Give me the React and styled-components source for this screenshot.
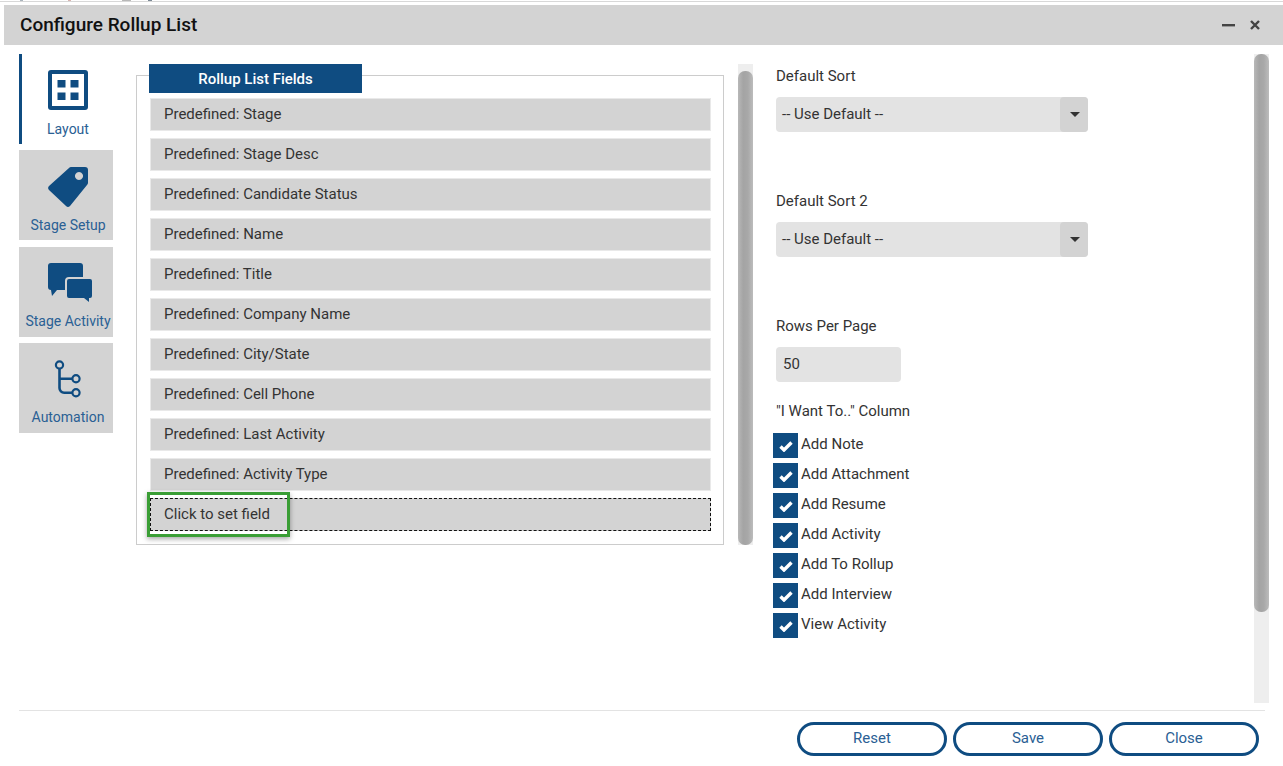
import styled, { createGlobalStyle } from 'styled-components';

const blue = '#0f4c81';

const GlobalStyle = createGlobalStyle`
  html, body {
    margin: 0;
    padding: 0;
    background: #fff;
    overflow: hidden;
  }
  * {
    box-sizing: border-box;
  }
`;

// slivers of the page behind the dialog, showing along the top edge
const BehindStrip = styled.div`
  height: 1px;
  width: 1283px;
  background:
    linear-gradient(#aab4bc, #aab4bc) 20px 0 / 3px 1px no-repeat,
    linear-gradient(#d8b4b0, #d8b4b0) 68px 0 / 3px 1px no-repeat,
    linear-gradient(#b8b8b8, #b8b8b8) 122px 0 / 9px 1px no-repeat,
    linear-gradient(#7d8a96, #7d8a96) 148px 0 / 4px 1px no-repeat,
    #fff;
`;

const Page = styled.div`
  width: 1283px;
  height: 765px;
  display: flex;
  flex-direction: column;
  padding: 3px 0 0 4px;
  border-top: 1px solid #d8d8d8;
  font-family: Roboto, "Liberation Sans", sans-serif;
  font-size: 15px;
  color: #333;
`;

const TitleBar = styled.header`
  height: 40px;
  flex: none;
  display: flex;
  align-items: center;
  justify-content: space-between;
  padding: 0 23px 0 16px;
  background: #d3d3d3;
`;

const Title = styled.h1`
  margin: 0 0 2px;
  font-size: 19px;
  font-weight: 500;
  color: #111;
`;

const WindowButtons = styled.div`
  display: flex;
  align-items: center;
  gap: 14px;
`;

const Body = styled.div`
  height: 655px;
  flex: none;
  display: flex;
  padding: 9px 0 0 15px;
`;

const Sidebar = styled.nav`
  width: 94px;
  flex: none;
  display: flex;
  flex-direction: column;
  gap: 6px;
`;

const NavLabel = styled.span`
  line-height: 17px;
`;

const NavItem = styled.div`
  height: 90px;
  flex: none;
  display: flex;
  flex-direction: column;
  align-items: center;
  padding: 15px 0 0 4px;
  background: ${({ $active }) => ($active ? '#fff' : '#d3d3d3')};
  box-shadow: ${({ $active }) => ($active ? `inset 3px 0 0 ${blue}` : 'none')};
  color: #2a6094;
  font-size: 14px;
  white-space: nowrap;

  &:nth-child(3) {
    margin-top: 1px;
  }

  &:nth-child(n + 3) ${NavLabel} {
    margin-top: -1px;
  }
`;

const NavIcon = styled.div`
  width: 42px;
  height: 42px;
  margin-bottom: 10px;
  display: flex;
  align-items: center;
  justify-content: center;

  svg {
    flex: none;
  }
`;

const FieldsColumn = styled.section`
  width: 588px;
  flex: none;
  margin-left: 23px;
  padding-top: 21px;
`;

const FieldsBox = styled.div`
  height: 470px;
  padding: 0 12px 0 13px;
  border: 1px solid #ccc;
`;

const Legend = styled.div`
  width: 213px;
  height: 29px;
  margin: -12px 0 5px -1px;
  display: flex;
  align-items: center;
  justify-content: center;
  background: ${blue};
  color: #fff;
  font-weight: 500;
`;

const FieldList = styled.div`
  display: flex;
  flex-direction: column;
  gap: 7px;
`;

const FieldRow = styled.div`
  position: relative;
  height: 33px;
  display: flex;
  align-items: center;
  padding: 0 0 2px 13px;
  background: #d3d3d3;
  border: 1px ${({ $empty }) => ($empty ? 'dashed #111' : 'solid #e9e9e9')};
`;

const Highlight = styled.div`
  position: absolute;
  left: -4px;
  top: -7px;
  width: 143px;
  height: 45px;
  border: 3px solid #3a9e35;
  box-shadow: 0 2px 5px rgba(0, 0, 0, 0.35);
  pointer-events: none;
`;

const ScrollTrack = styled.div`
  width: 15px;
  height: ${({ $height }) => $height}px;
  flex: none;
  margin-left: ${({ $left }) => $left}px;
  margin-top: ${({ $top }) => $top}px;
  padding-top: ${({ $pad }) => $pad}px;
  background: #eee;
`;

const ScrollThumb = styled.div`
  height: ${({ $height }) => $height}px;
  border-radius: 7px;
  background: linear-gradient(90deg, #b8b8b8 0%, #a4a4a4 35%, #a8a8a8 65%, #bcbcbc 100%);
`;

const Settings = styled.section`
  width: 312px;
  flex: none;
  margin-left: 23px;
  padding-top: 14px;
`;

const Label = styled.div`
  height: 17px;
  line-height: 17px;
  margin-top: ${({ $top }) => $top || 0}px;
`;

const SelectBox = styled.div`
  height: 35px;
  margin-top: 12px;
  display: flex;
  align-items: center;
  justify-content: space-between;
  padding-left: 6px;
  background: #e3e3e3;
  border-radius: 4px;
`;

const SelectText = styled.span`
  margin-top: -2px;
`;

const SelectArrow = styled.div`
  width: 28px;
  height: 35px;
  display: flex;
  align-items: center;
  justify-content: center;
  padding-left: 1px;
  background: #d3d3d3;
  border-radius: 4px;

  &::after {
    content: '';
    border-left: 5px solid transparent;
    border-right: 5px solid transparent;
    border-top: 5px solid #333;
  }
`;

const NumberBox = styled.div`
  width: 125px;
  height: 35px;
  margin-top: 12px;
  display: flex;
  align-items: center;
  padding: 0 0 2px 7px;
  background: #e3e3e3;
  border-radius: 4px;
`;

const CheckList = styled.div`
  margin: 13px 0 0 -3px;
  display: flex;
  flex-direction: column;
  gap: 5px;
`;

const CheckRow = styled.label`
  height: 25px;
  display: flex;
  align-items: flex-start;
  gap: 3px;
  line-height: 17px;
`;

const CheckBox = styled.span`
  width: 25px;
  height: 25px;
  flex: none;
  display: flex;
  align-items: center;
  justify-content: center;
  background: ${blue};
`;

const CheckText = styled.span`
  margin-top: 3px;
`;

const Footer = styled.footer`
  flex: none;
  height: 55px;
  margin: 10px 18px 0 15px;
  padding: 11px 6px 0 0;
  display: flex;
  justify-content: flex-end;
  gap: 6px;
  border-top: 1px solid #e3e3e3;
`;

const FooterButton = styled.button`
  width: 150px;
  height: 34px;
  padding: 0 0 2px;
  background: #fff;
  border: 3px solid ${blue};
  border-radius: 17px;
  color: #2a6094;
  font: 15px Roboto, "Liberation Sans", sans-serif;
`;

const LayoutIcon = () => (
  <svg width="42" height="42" viewBox="0 0 42 42">
    <rect x="1" y="1" width="40" height="40" rx="3" fill={blue} />
    <rect x="5" y="5" width="32" height="32" fill="#fff" />
    <rect x="10.5" y="11" width="8" height="7.5" fill={blue} />
    <rect x="23.5" y="11" width="8" height="7.5" fill={blue} />
    <rect x="10.5" y="23.5" width="8" height="7.5" fill={blue} />
    <rect x="23.5" y="23.5" width="8" height="7.5" fill={blue} />
  </svg>
);

const TagIcon = () => (
  <svg width="42" height="42" viewBox="0 0 42 42">
    <path
      fill={blue}
      fillRule="evenodd"
      d="M24 2 H38 a3 3 0 0 1 3 3 V18 a3 3 0 0 1 -1 2 L23 41 a3 3 0 0 1 -4 0 L2 25 a3 3 0 0 1 0 -4 L22 3 a3 3 0 0 1 2 -1 Z M32 7 a4 4 0 1 0 0.01 0 Z"
    />
  </svg>
);

const ChatIcon = () => (
  <svg width="50" height="42" viewBox="-5 0 50 42">
    <path
      fill={blue}
      d="M3 1 H32 a3 3 0 0 1 3 3 V15 H21 a4 4 0 0 0 -4 4 V28 H9 L4 34 L3 28 a3 3 0 0 1 -3 -3 V4 a3 3 0 0 1 3 -3 Z"
    />
    <path
      fill={blue}
      d="M21 17 H42 a2 2 0 0 1 2 2 V34 a2 2 0 0 1 -2 2 H41 V40 L36 36 H21 a2 2 0 0 1 -2 -2 V19 a2 2 0 0 1 2 -2 Z"
    />
  </svg>
);

const FlowIcon = () => (
  <svg width="42" height="42" viewBox="0 0 42 42" fill="none" stroke={blue}>
    <circle cx="12.5" cy="7" r="3.6" strokeWidth="2.2" />
    <circle cx="29" cy="20.7" r="3.6" strokeWidth="2.2" />
    <circle cx="29" cy="34.7" r="3.6" strokeWidth="2.2" />
    <path strokeWidth="2.6" d="M12.5 11 V30 a4.7 4.7 0 0 0 4.7 4.7 H25 M12.5 20.7 H25" />
  </svg>
);

const navItems = [
  { label: 'Layout', icon: <LayoutIcon />, active: true },
  { label: 'Stage Setup', icon: <TagIcon /> },
  { label: 'Stage Activity', icon: <ChatIcon /> },
  { label: 'Automation', icon: <FlowIcon /> },
];

const fields = [
  'Stage',
  'Stage Desc',
  'Candidate Status',
  'Name',
  'Title',
  'Company Name',
  'City/State',
  'Cell Phone',
  'Last Activity',
  'Activity Type',
];

const actions = [
  'Add Note',
  'Add Attachment',
  'Add Resume',
  'Add Activity',
  'Add To Rollup',
  'Add Interview',
  'View Activity',
];

export default function App() {
  return (
    <>
      <GlobalStyle />
      <BehindStrip />
      <Page>
        <TitleBar>
          <Title>Configure Rollup List</Title>
          <WindowButtons>
            <svg width="14" height="12" viewBox="0 0 14 12">
              <rect x="0" y="5" width="13" height="2.4" fill="#444" />
            </svg>
            <svg width="10" height="10" viewBox="0 0 10 10">
              <path d="M1 1 L9 9 M9 1 L1 9" stroke="#444" strokeWidth="2.4" />
            </svg>
          </WindowButtons>
        </TitleBar>

        <Body>
          <Sidebar>
            {navItems.map((item) => (
              <NavItem key={item.label} $active={item.active}>
                <NavIcon>{item.icon}</NavIcon>
                <NavLabel>{item.label}</NavLabel>
              </NavItem>
            ))}
          </Sidebar>

          <FieldsColumn>
            <FieldsBox>
              <Legend>Rollup List Fields</Legend>
              <FieldList>
                {fields.map((field) => (
                  <FieldRow key={field}>Predefined: {field}</FieldRow>
                ))}
                <FieldRow $empty>
                  Click to set field
                  <Highlight />
                </FieldRow>
              </FieldList>
            </FieldsBox>
          </FieldsColumn>

          <ScrollTrack $left={14} $top={10} $height={481} $pad={7}>
            <ScrollThumb $height={474} />
          </ScrollTrack>

          <Settings>
            <Label>Default Sort</Label>
            <SelectBox>
              <SelectText>-- Use Default --</SelectText>
              <SelectArrow />
            </SelectBox>
            <Label $top={61}>Default Sort 2</Label>
            <SelectBox>
              <SelectText>-- Use Default --</SelectText>
              <SelectArrow />
            </SelectBox>
            <Label $top={61}>Rows Per Page</Label>
            <NumberBox>50</NumberBox>
            <Label $top={21}>"I Want To.." Column</Label>
            <CheckList>
              {actions.map((action) => (
                <CheckRow key={action}>
                  <CheckBox>
                    <svg width="14" height="12" viewBox="0 0 14 12">
                      <path d="M1.5 6.5 L5 10 L12.5 2.5" fill="none" stroke="#fff" strokeWidth="3.4" />
                    </svg>
                  </CheckBox>
                  <CheckText>{action}</CheckText>
                </CheckRow>
              ))}
            </CheckList>
          </Settings>

          <ScrollTrack $left={166} $top={0} $height={649} $pad={0}>
            <ScrollThumb $height={558} />
          </ScrollTrack>
        </Body>

        <Footer>
          <FooterButton>Reset</FooterButton>
          <FooterButton>Save</FooterButton>
          <FooterButton>Close</FooterButton>
        </Footer>
      </Page>
    </>
  );
}
